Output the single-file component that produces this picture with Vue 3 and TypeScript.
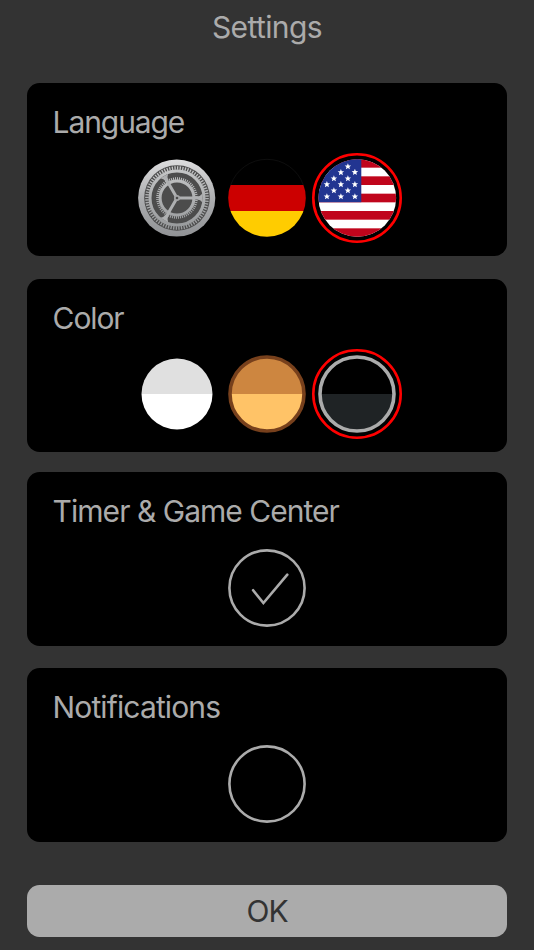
<script setup lang="ts">
import { ref } from 'vue'

type Language = 'system' | 'de' | 'en'
type Theme = 'light' | 'wood' | 'dark'

const language = ref<Language>('en')
const theme = ref<Theme>('dark')
const timer = ref(true)
const notifications = ref(false)

const languages: Language[] = ['system', 'de', 'en']
const themes: { id: Theme; top: string; bottom: string; edge: string; radius: number; stroke: number }[] = [
  { id: 'light', top: '#e0e0e0', bottom: '#ffffff', edge: 'none', radius: 35.5, stroke: 0 },
  { id: 'wood', top: '#cd8640', bottom: '#ffc367', edge: '#77401c', radius: 37.2, stroke: 3.6 },
  { id: 'dark', top: '#000000', bottom: '#1f2325', edge: '#ababab', radius: 37.2, stroke: 3.6 },
]

const stripe = 78 / 9
const stars: [number, number][] = [
  [29.9, 7.6], [22.9, 13.4], [36.9, 13.2], [15.9, 19.6], [29.9, 19.6],
  [8.9, 25.4], [22.9, 25.4], [36.9, 25.4], [15.9, 31.6], [29.9, 31.6],
  [8.9, 37.6], [22.9, 37.6], [36.9, 37.6],
]
const starShape = Array.from({ length: 10 }, (_, i) => {
  const r = i % 2 === 0 ? 3.4 : 1.5
  const a = (i * Math.PI) / 5 - Math.PI / 2
  return `${(r * Math.cos(a)).toFixed(2)},${(r * Math.sin(a)).toFixed(2)}`
}).join(' ')
</script>

<template>
  <main class="settings">
    <h1 class="title">Settings</h1>

    <section class="card">
      <h2 class="label language">Language</h2>
      <div class="options">
        <button v-for="item in languages" :key="item" class="option" @click="language = item">
          <svg class="icon" viewBox="-6 -6 90 90">
            <g v-if="item === 'system'">
              <defs>
                <linearGradient id="metal" gradientUnits="userSpaceOnUse" x1="0" y1="0" x2="0" y2="78">
                  <stop offset="0" stop-color="#dededf" />
                  <stop offset="0.5" stop-color="#adaeb0" />
                  <stop offset="1" stop-color="#909295" />
                </linearGradient>
                <linearGradient id="steel" gradientUnits="userSpaceOnUse" x1="0" y1="8" x2="0" y2="70">
                  <stop offset="0" stop-color="#c6c7c8" />
                  <stop offset="1" stop-color="#97999b" />
                </linearGradient>
              </defs>
              <circle cx="38.700" cy="39" r="38.600" fill="url(#metal)" />
              <circle cx="39" cy="39" r="32.8" fill="#4c4c4c" />
              <g fill="none" stroke="url(#steel)">
                <circle cx="39" cy="39" r="30" stroke-width="3.6" pathLength="144" stroke-dasharray="1 1" />
                <circle cx="39" cy="39" r="27" stroke-width="3" />
                <circle cx="39" cy="39" r="19.400" stroke-width="2.8" pathLength="120" stroke-dasharray="1 1" />
                <circle cx="39" cy="39" r="16.900" stroke-width="3" />
              </g>
              <path
                v-for="angle in [0, 120, 240]"
                :key="angle"
                :transform="`rotate(${angle} 39 39)`"
                d="M39 37.500H59Q62.500 37.300 64.500 34.500V43.500Q62.500 40.700 59 40.500H39Z"
                fill="url(#steel)"
              />
              <circle cx="39" cy="39" r="3" fill="#a5a6a8" />
              <circle cx="39" cy="39" r="1.3" fill="#4b4b4b" />
            </g>

            <g v-else-if="item === 'de'">
              <clipPath id="clip-de"><circle cx="39" cy="39" r="38.8" /></clipPath>
              <g clip-path="url(#clip-de)">
                <rect width="78" height="26" fill="#000" />
                <rect y="26" width="78" height="26" fill="#c00" />
                <rect y="52" width="78" height="26" fill="#fc0" />
              </g>
              <path d="M2.700 26a38.500 38.500 0 0 1 72.600 0" fill="none" stroke="#171717" stroke-width="0.6" />
            </g>

            <g v-else>
              <clipPath id="clip-en"><circle cx="39.3" cy="39" r="38.8" /></clipPath>
              <g clip-path="url(#clip-en)">
                <rect width="79" height="78" fill="#fff" />
                <rect v-for="n in 5" :key="n" :y="(n - 1) * 2 * stripe" width="79" :height="stripe" fill="#c0051c" />
                <rect width="43.3" height="43.2" fill="#223591" />
                <polygon
                  v-for="([x, y], i) in stars"
                  :key="i"
                  :points="starShape"
                  :transform="`translate(${x} ${y})`"
                  fill="#fff"
                />
              </g>
            </g>
            <circle v-if="language === item" cx="39" cy="39" r="43.7" class="ring" />
          </svg>
        </button>
      </div>
    </section>

    <section class="card">
      <h2 class="label color">Color</h2>
      <div class="options">
        <button v-for="item in themes" :key="item.id" class="option" @click="theme = item.id">
          <svg class="icon" viewBox="-6 -6 90 90">
            <clipPath :id="`clip-${item.id}`"><circle cx="39" cy="39" :r="item.radius" /></clipPath>
            <g :clip-path="`url(#clip-${item.id})`">
              <rect width="78" height="39" :fill="item.top" />
              <rect y="39" width="78" height="39" :fill="item.bottom" />
            </g>
            <circle
              v-if="item.stroke"
              cx="39"
              cy="39"
              :r="item.radius - 0.2"
              fill="none"
              :stroke="item.edge"
              :stroke-width="item.stroke"
            />
            <circle v-if="theme === item.id" cx="39" cy="39" r="43.7" class="ring" />
          </svg>
        </button>
      </div>
    </section>

    <section class="card">
      <h2 class="label timer">Timer &amp; Game Center</h2>
      <div class="options">
        <button class="option" @click="timer = !timer">
          <svg class="icon" viewBox="-6 -6 90 90">
            <circle cx="39" cy="39" r="37.6" class="line" />
            <path v-if="timer" d="M25.100 41.200L35.400 54L59.300 25.700" class="line" />
          </svg>
        </button>
      </div>
    </section>

    <section class="card">
      <h2 class="label notifications">Notifications</h2>
      <div class="options">
        <button class="option" @click="notifications = !notifications">
          <svg class="icon" viewBox="-6 -6 90 90">
            <circle cx="39" cy="39" r="37.6" class="line" />
            <path v-if="notifications" d="M25.100 41.200L35.400 54L59.300 25.700" class="line" />
          </svg>
        </button>
      </div>
    </section>

    <button class="confirm">OK</button>
  </main>
</template>

<style>
body {
  background: #333;
}
</style>

<style scoped>
.settings {
  box-sizing: border-box;
  height: 950px;
  padding: 9px 27px 0;
  display: flex;
  flex-direction: column;
  background: #333;
  color: #ababab;
  font-family: Inter, "Liberation Sans", sans-serif;
  font-size: 30px;
  font-weight: 400;
}

.title,
.label {
  margin: 0;
  font-size: 30px;
  font-weight: 400;
  line-height: 36px;
  white-space: nowrap;
}

.title {
  margin-bottom: 37.5px;
  text-align: center;
  letter-spacing: -0.6px;
}

.label {
  margin-left: -0.4px;
}

.language {
  letter-spacing: -1.1px;
}

.color {
  letter-spacing: -1.1px;
}

.timer {
  letter-spacing: -0.97px;
}

.notifications {
  letter-spacing: -0.88px;
}

.card {
  box-sizing: border-box;
  flex: none;
  height: 173.7px;
  margin-bottom: 22.4px;
  padding: 21px 26px 0;
  border-radius: 12.5px;
  background: #000;
}

.card:nth-of-type(2) {
  margin-bottom: 20px;
}

.options {
  display: flex;
  justify-content: center;
  margin-top: 13.5px;
}

.option {
  width: 90px;
  height: 90px;
  padding: 0;
  border: 0;
  border-radius: 50%;
  background: none;
}

.icon {
  display: block;
  width: 90px;
  height: 90px;
}

.ring {
  fill: none;
  stroke: #f00;
  stroke-width: 2.6;
}

.line {
  fill: none;
  stroke: #ababab;
  stroke-width: 2.6;
  stroke-linecap: round;
  stroke-linejoin: miter;
}

.confirm {
  flex: none;
  height: 52px;
  margin-top: 20.8px;
  padding: 0;
  border: 0;
  border-radius: 12.5px;
  background: #ababab;
  color: #333;
  font: inherit;
  letter-spacing: -1px;
}
</style>
